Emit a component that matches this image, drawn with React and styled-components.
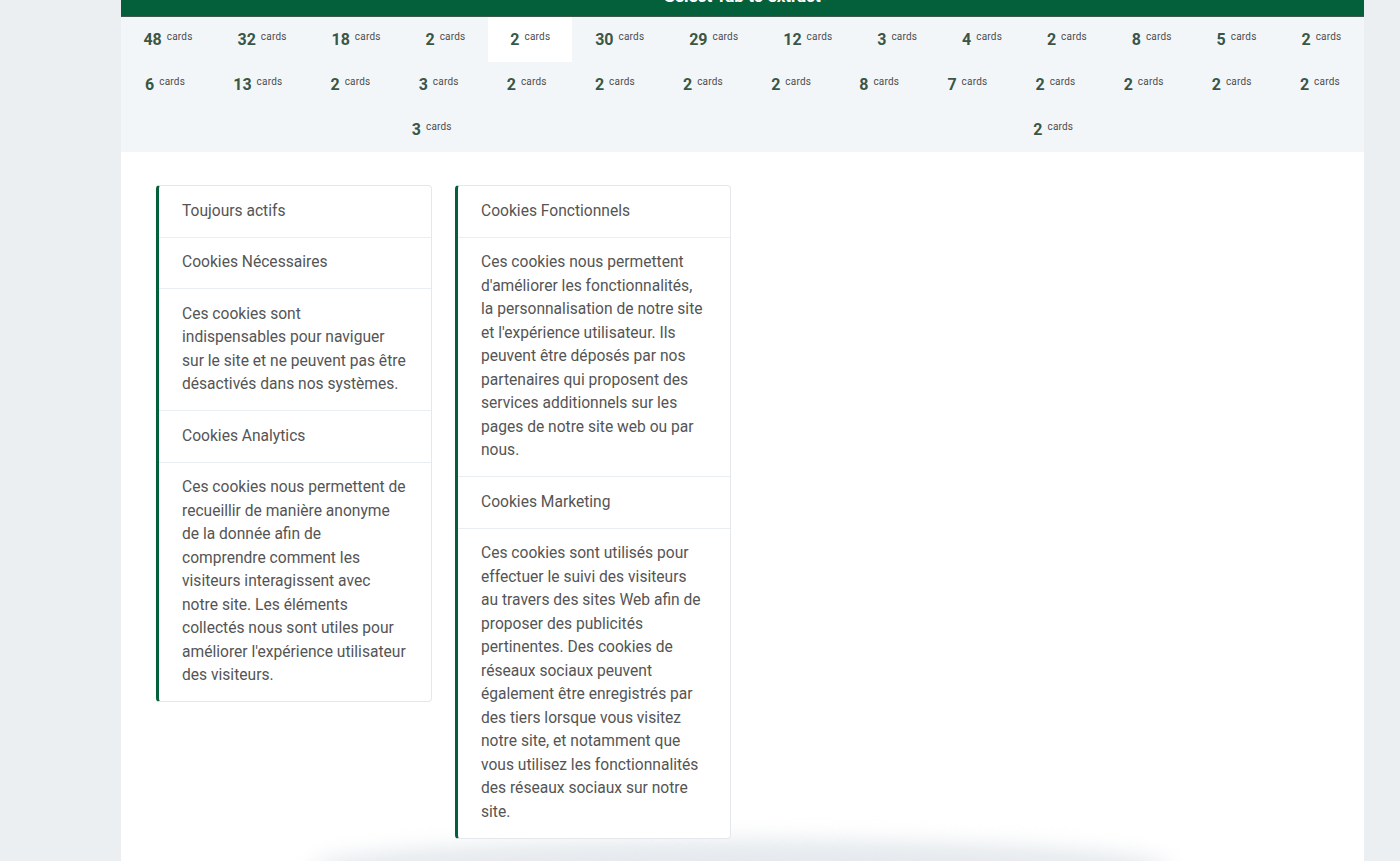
import React from "react";
import styled, { createGlobalStyle } from "styled-components";

const GlobalStyle = createGlobalStyle`
  html, body {
    margin: 0;
    padding: 0;
    background: #eceff2;
    font-family: Roboto, "Liberation Sans", sans-serif;
  }
`;

const Page = styled.div`
  margin-left: 121px;
  width: 1243px;
  min-height: 100vh;
  background: #ffffff;
  position: relative;
  overflow: hidden;
`;

const Header = styled.div`
  height: 16px;
  background: #04603a;
  border-bottom: 1px solid #3f5a4c;
  overflow: hidden;
  text-align: center;
`;

const HeaderTitle = styled.div`
  margin-top: -14px;
  color: #ffffff;
  font-weight: 700;
  font-size: 17px;
  line-height: 20px;
`;

const Tabs = styled.div`
  display: flex;
  flex-wrap: wrap;
  justify-content: space-around;
  background: #f3f6f9;
`;

const Tab = styled.div`
  height: 45px;
  box-sizing: border-box;
  padding: 14px 22px 0;
  line-height: 18px;
  white-space: nowrap;
  background: ${(p) => (p.$active ? "#ffffff" : "transparent")};
  cursor: pointer;
`;

const Count = styled.span`
  font-size: 16px;
  font-weight: 700;
  color: #3a5646;
`;

const Unit = styled.span`
  position: relative;
  top: -5px;
  margin-left: 5px;
  font-size: 10px;
  color: #4d4d4d;
  letter-spacing: 0.2px;
`;

const Content = styled.div`
  position: relative;
  z-index: 1;
  display: flex;
  align-items: flex-start;
  gap: 23px;
  padding: 33px 35px 22px;
`;

const Card = styled.div`
  width: 276px;
  box-sizing: border-box;
  background: #ffffff;
  border: 1px solid #e4e8ec;
  border-left: 3px solid #04603a;
  border-radius: 4px;
`;

const Row = styled.div`
  padding: 13.5px 12px 13.5px 23px;
  font-size: 15.6px;
  line-height: 23.5px;
  color: #555555;
  white-space: pre-line;
  & + & {
    border-top: 1px solid #e9eef3;
  }
`;

const Glow = styled.div`
  position: absolute;
  left: 190px;
  bottom: -34px;
  width: 860px;
  height: 56px;
  border-radius: 50%;
  background: #e6eaee;
  filter: blur(10px);
  z-index: 0;
`;

const tabs = [
  48, 32, 18, 2, 2, 30, 29, 12, 3, 4, 2, 8, 5, 2,
  6, 13, 2, 3, 2, 2, 2, 2, 8, 7, 2, 2, 2, 2,
  3, 2,
];

const columns = [
  [
    "Toujours actifs",
    "Cookies Nécessaires",
    "Ces cookies sont\nindispensables pour naviguer\nsur le site et ne peuvent pas être\ndésactivés dans nos systèmes.",
    "Cookies Analytics",
    "Ces cookies nous permettent de\nrecueillir de manière anonyme\nde la donnée afin de\ncomprendre comment les\nvisiteurs interagissent avec\nnotre site. Les éléments\ncollectés nous sont utiles pour\naméliorer l'expérience utilisateur\ndes visiteurs.",
  ],
  [
    "Cookies Fonctionnels",
    "Ces cookies nous permettent\nd'améliorer les fonctionnalités,\nla personnalisation de notre site\net l'expérience utilisateur. Ils\npeuvent être déposés par nos\npartenaires qui proposent des\nservices additionnels sur les\npages de notre site web ou par\nnous.",
    "Cookies Marketing",
    "Ces cookies sont utilisés pour\neffectuer le suivi des visiteurs\nau travers des sites Web afin de\nproposer des publicités\npertinentes. Des cookies de\nréseaux sociaux peuvent\négalement être enregistrés par\ndes tiers lorsque vous visitez\nnotre site, et notamment que\nvous utilisez les fonctionnalités\ndes réseaux sociaux sur notre\nsite.",
  ],
];

const App = () => {
  return (
    <>
      <GlobalStyle />
      <Page>
        <Header>
          <HeaderTitle>Select Tab to extract</HeaderTitle>
        </Header>
        <Tabs>
          {tabs.map((n, i) => (
            <Tab key={i} $active={i === 4}>
              <Count>{n}</Count>
              <Unit>cards</Unit>
            </Tab>
          ))}
        </Tabs>
        <Content>
          {columns.map((rows, i) => (
            <Card key={i}>
              {rows.map((text, j) => (
                <Row key={j}>{text}</Row>
              ))}
            </Card>
          ))}
        </Content>
        <Glow />
      </Page>
    </>
  );
};

export default App;
